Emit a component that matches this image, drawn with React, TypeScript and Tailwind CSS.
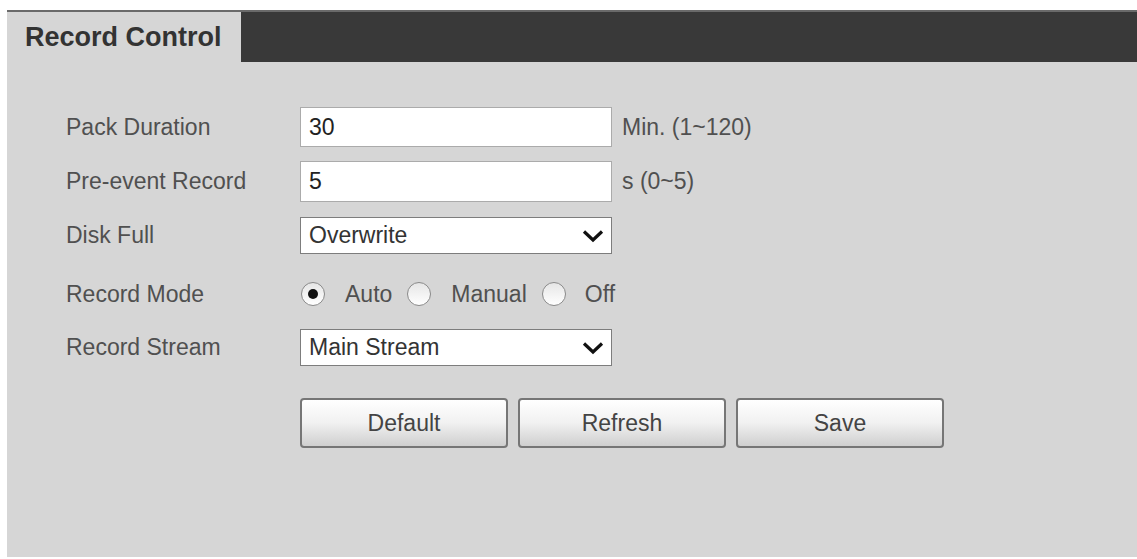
import { useState } from "react";

const font = { fontFamily: '"Liberation Sans", Arial, sans-serif' };

function Chevron() {
  return (
    <svg width="22" height="14" viewBox="0 0 22 14" className="shrink-0">
      <path d="M2 2.5 L11 11 L20 2.5" fill="none" stroke="#111" strokeWidth="3.2" />
    </svg>
  );
}

function Select({ value }: { value: string }) {
  return (
    <div className="flex h-full w-[312px] items-center justify-between border border-[#7d7d7d] bg-white pl-2 pr-[7px] text-[23px] text-[#333]">
      <span>{value}</span>
      <Chevron />
    </div>
  );
}

function Radio({ checked, onClick }: { checked: boolean; onClick: () => void }) {
  return (
    <button
      onClick={onClick}
      className="flex h-[24px] w-[24px] items-center justify-center rounded-full border border-[#8a8a8a] bg-gradient-to-b from-[#e6e6e6] to-white"
    >
      {checked && <span className="h-[10px] w-[10px] rounded-full bg-[#111]" />}
    </button>
  );
}

export default function App() {
  const [mode, setMode] = useState("Auto");
  const btn =
    "flex h-[50px] w-[208px] items-center justify-center rounded-[4px] border-2 border-[#767676] bg-gradient-to-b from-white via-[#f1f1f1] to-[#cfcfcf] text-[23px] text-[#444]";

  return (
    <div className="h-[559px] w-[1137px] bg-white pt-[10px] pl-[7px]" style={font}>
      <div className="flex h-[547px] flex-col bg-[#d6d6d6]">
        <div className="flex h-[52px] border-t-2 border-[#6a6a6a]">
          <div className="flex w-[234px] items-center pl-[18px] text-[27px] font-bold text-[#333]">
            Record Control
          </div>
          <div className="flex-1 bg-[#393939]" />
        </div>

        <div className="flex flex-col pl-[59px] text-[23px] text-[#505050]">
          <div className="mt-[45px] flex h-[40px] items-center">
            <span className="w-[234px]">Pack Duration</span>
            <div className="flex h-full w-[312px] items-center border border-[#ababab] bg-white pl-2 text-[#222]">30</div>
            <span className="ml-[10px]">Min. (1~120)</span>
          </div>

          <div className="mt-[14px] flex h-[41px] items-center">
            <span className="w-[234px]">Pre-event Record</span>
            <div className="flex h-full w-[312px] items-center border border-[#ababab] bg-white pl-2 text-[#222]">5</div>
            <span className="ml-[10px]">s (0~5)</span>
          </div>

          <div className="mt-[15px] flex h-[37px] items-center">
            <span className="w-[234px]">Disk Full</span>
            <Select value="Overwrite" />
          </div>

          <div className="mt-[22px] flex h-[36px] items-center">
            <span className="w-[234px]">Record Mode</span>
            <div className="flex items-center pl-px">
              <Radio checked={mode === "Auto"} onClick={() => setMode("Auto")} />
              <span className="ml-[20px] mr-[15px]">Auto</span>
              <Radio checked={mode === "Manual"} onClick={() => setMode("Manual")} />
              <span className="ml-[20px] mr-[15px]">Manual</span>
              <Radio checked={mode === "Off"} onClick={() => setMode("Off")} />
              <span className="ml-[19px]">Off</span>
            </div>
          </div>

          <div className="mt-[17px] flex h-[37px] items-center">
            <span className="w-[234px]">Record Stream</span>
            <Select value="Main Stream" />
          </div>

          <div className="mt-[32px] flex gap-[10px] pl-[234px]">
            <button className={btn}>Default</button>
            <button className={btn}>Refresh</button>
            <button className={btn}>Save</button>
          </div>
        </div>
      </div>
    </div>
  );
}
